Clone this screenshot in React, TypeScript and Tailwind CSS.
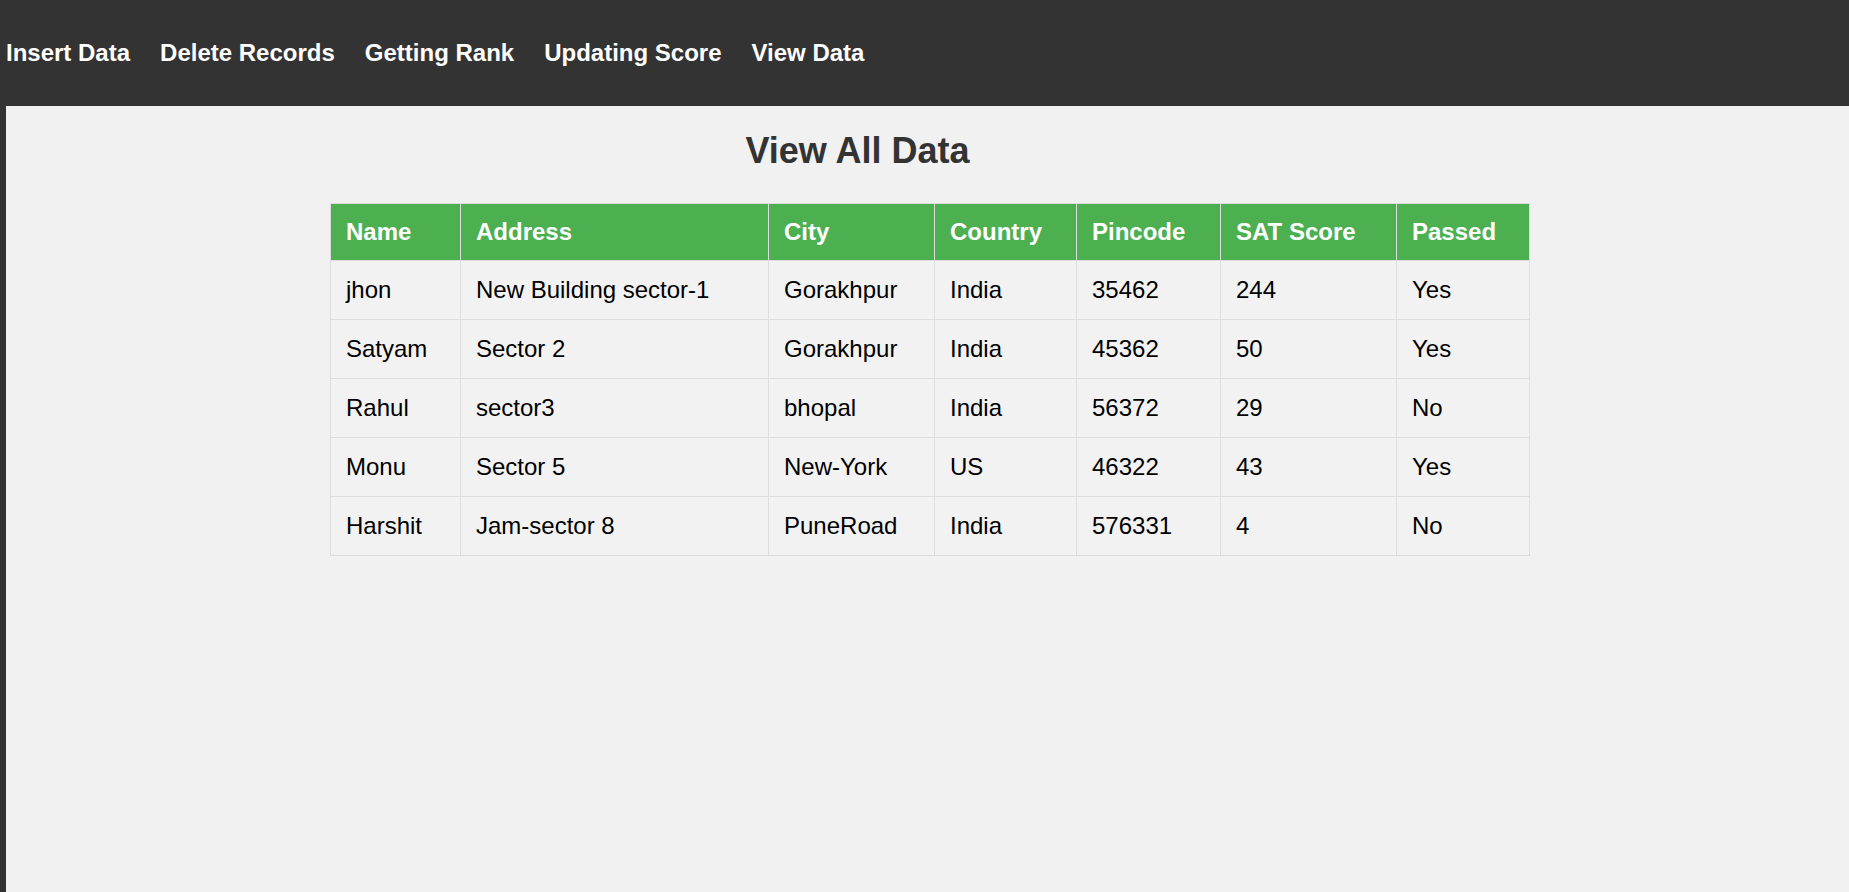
const rows = [
  ["jhon", "New Building sector-1", "Gorakhpur", "India", "35462", "244", "Yes"],
  ["Satyam", "Sector 2", "Gorakhpur", "India", "45362", "50", "Yes"],
  ["Rahul", "sector3", "bhopal", "India", "56372", "29", "No"],
  ["Monu", "Sector 5", "New-York", "US", "46322", "43", "Yes"],
  ["Harshit", "Jam-sector 8", "PuneRoad", "India", "576331", "4", "No"],
];

const cols = [
  { label: "Name", w: "w-[130px]" },
  { label: "Address", w: "w-[308px]" },
  { label: "City", w: "w-[166px]" },
  { label: "Country", w: "w-[142px]" },
  { label: "Pincode", w: "w-[144px]" },
  { label: "SAT Score", w: "w-[176px]" },
  { label: "Passed", w: "w-[133px]" },
];

const links = ["Insert Data", "Delete Records", "Getting Rank", "Updating Score", "View Data"];

export default function App() {
  return (
    <div className="flex min-h-screen flex-col bg-[#333333] font-['Liberation_Sans',Arial,sans-serif]">
      {/* barra superior */}
      <nav className="flex h-[106px] shrink-0 items-center gap-[30px] pl-[6px]">
        {links.map((l) => (
          <a key={l} href="#" className="text-[24px] font-bold leading-none text-white">
            {l}
          </a>
        ))}
      </nav>

      <main className="ml-[6px] flex-1 bg-[#f1f1f1] pt-[24px]">
        <h2 className="pr-[140px] text-center text-[36px] font-bold leading-[41px] text-[#333333]">
          View All Data
        </h2>

        <div className="pl-[5px] pt-[32px]">
          <table className="mx-auto w-[1199px] table-fixed border-collapse text-[24px]">
            <thead>
              <tr className="bg-[#4caf50] text-white">
                {cols.map((c) => (
                  <th
                    key={c.label}
                    className={`${c.w} border border-[#dddddd] px-[15px] py-[14px] text-left font-bold leading-[28px]`}
                  >
                    {c.label}
                  </th>
                ))}
              </tr>
            </thead>
            <tbody>
              {rows.map((r) => (
                <tr key={r[0]} className="bg-[#f2f2f2] text-black">
                  {r.map((v, i) => (
                    <td key={i} className="border border-[#dddddd] px-[15px] py-[15px] leading-[28px]">
                      {v}
                    </td>
                  ))}
                </tr>
              ))}
            </tbody>
          </table>
        </div>
      </main>
    </div>
  );
}
